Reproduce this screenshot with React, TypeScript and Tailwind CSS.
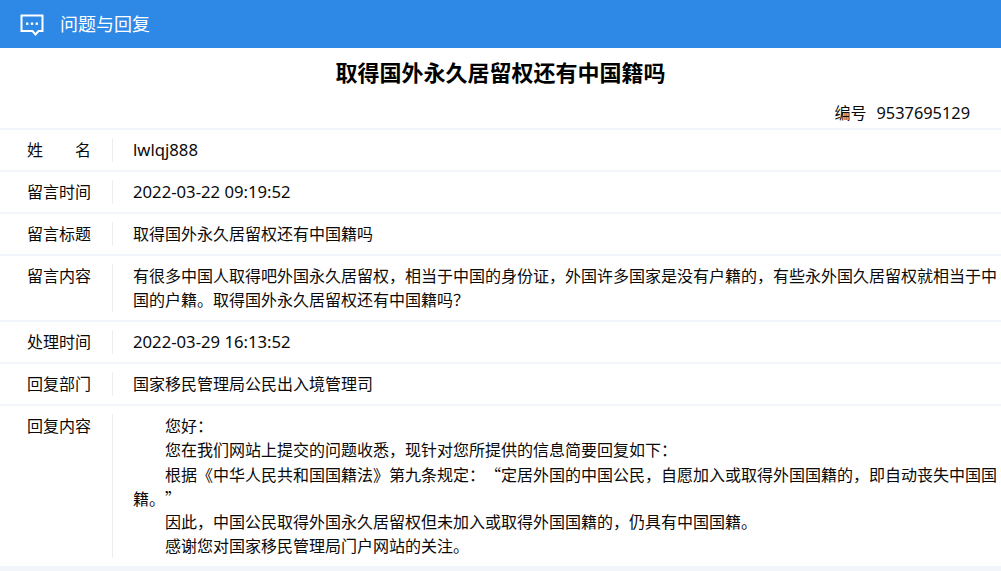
const font = "font-['Noto_Sans','Noto_Sans_CJK_SC',sans-serif]";

function Row({ label, children, justify }: { label: string; children: React.ReactNode; justify?: boolean }) {
  return (
    <div className="flex border-b-2 border-[#f2f5f9] py-2 text-[16px] leading-6 text-[#0a0a0a]">
      {justify ? (
        <div className="flex w-[113px] shrink-0 justify-between border-r border-[#eeeeee] pl-[27px] pr-[21px]">
          {label.split("").map((c) => (
            <span key={c}>{c}</span>
          ))}
        </div>
      ) : (
        <div className="w-[113px] shrink-0 border-r border-[#eeeeee] pl-[27px]">{label}</div>
      )}
      <div className="min-w-0 flex-1 pl-5 [text-spacing-trim:space-all]">{children}</div>
    </div>
  );
}

function Latin({ children }: { children: React.ReactNode }) {
  return <span className="text-[16.7px]">{children}</span>;
}

export default function App() {
  return (
    <div className={`${font} min-h-[571px] w-[1001px] overflow-hidden bg-[#f2f6fb]`}>
      <header className="flex h-12 items-center bg-[#2d89e5] pl-5 text-white">
        <svg width="24" height="22" viewBox="0 0 24 22" fill="none" className="mr-4 mt-[2px]">
          <path d="M1.5 1.5H22.5V17H18.5L15.5 20.5L12.5 17H1.5Z" stroke="white" strokeWidth="2" strokeLinejoin="miter" />
          <rect x="6" y="8.5" width="2.4" height="2.4" fill="white" />
          <rect x="10.8" y="8.5" width="2.4" height="2.4" fill="white" />
          <rect x="15.6" y="8.5" width="2.4" height="2.4" fill="white" />
        </svg>
        <span className="text-[18px]">问题与回复</span>
      </header>
      <div className="bg-white">
        <h1 className="pt-2 text-center text-[22px] font-bold leading-[32px] text-black">取得国外永久居留权还有中国籍吗</h1>
        <div className="flex h-[42px] items-end justify-end gap-[10px] border-b-2 border-[#f2f5f9] pb-[3px] pr-[31px] text-[16px] leading-6 text-[#0a0a0a]">
          <span>编号</span>
          <span className="text-[16.35px]">9537695129</span>
        </div>
        <Row label="姓名" justify><Latin>lwlqj888</Latin></Row>
        <Row label="留言时间"><Latin>2022-03-22 09:19:52</Latin></Row>
        <Row label="留言标题">取得国外永久居留权还有中国籍吗</Row>
        <Row label="留言内容">有很多中国人取得吧外国永久居留权，相当于中国的身份证，外国许多国家是没有户籍的，有些永外国久居留权就相当于中国的户籍。取得国外永久居留权还有中国籍吗？</Row>
        <Row label="处理时间"><Latin>2022-03-29 16:13:52</Latin></Row>
        <Row label="回复部门">国家移民管理局公民出入境管理司</Row>
        <Row label="回复内容">
          <p className="indent-8">您好：</p>
          <p className="indent-8">您在我们网站上提交的问题收悉，现针对您所提供的信息简要回复如下：</p>
          <p className="indent-8 font-['Noto_Sans_CJK_SC',sans-serif]">根据《中华人民共和国国籍法》第九条规定：“定居外国的中国公民，自愿加入或取得外国国籍的，即自动丧失中国国籍。”</p>
          <p className="indent-8">因此，中国公民取得外国永久居留权但未加入或取得外国国籍的，仍具有中国国籍。</p>
          <p className="indent-8">感谢您对国家移民管理局门户网站的关注。</p>
        </Row>
      </div>
    </div>
  );
}
